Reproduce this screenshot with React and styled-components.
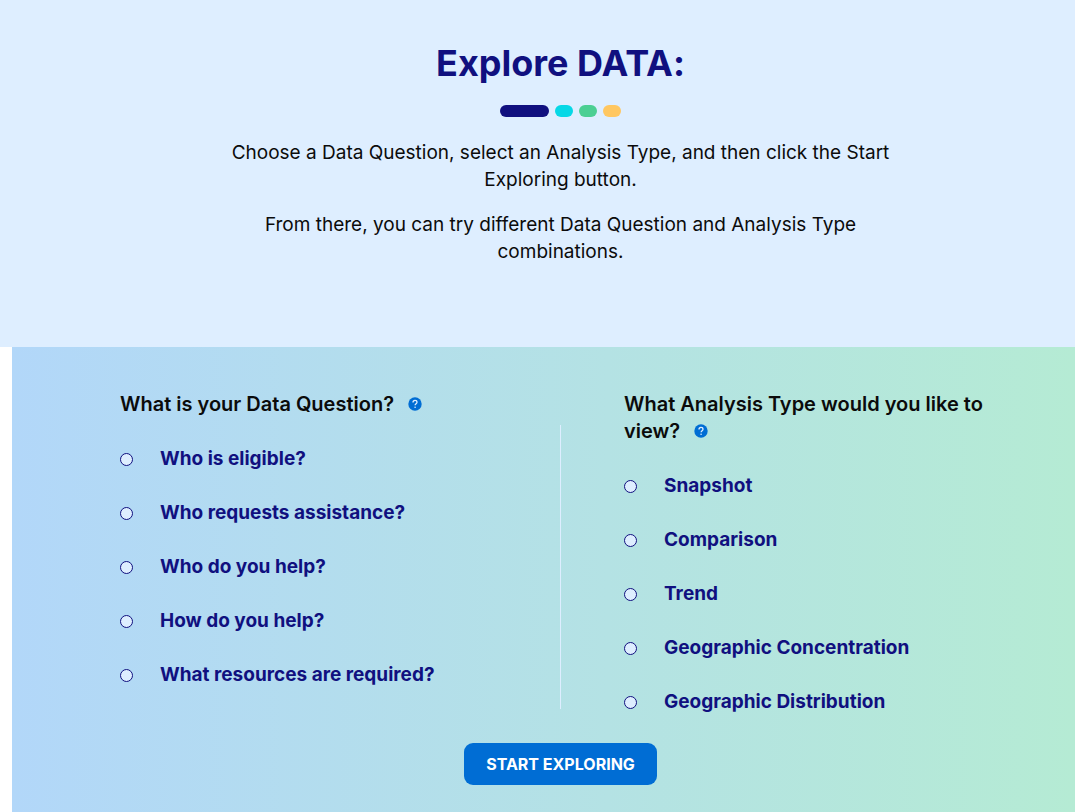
import React, { useState } from "react";
import styled, { createGlobalStyle } from "styled-components";

const questions = [
  "Who is eligible?",
  "Who requests assistance?",
  "Who do you help?",
  "How do you help?",
  "What resources are required?",
];

const analysisTypes = [
  "Snapshot",
  "Comparison",
  "Trend",
  "Geographic Concentration",
  "Geographic Distribution",
];

function OptionGroup({ name, title, options }) {
  const [selected, setSelected] = useState(null);

  return (
    <Group>
      <legend>
        {title}
        <Help type="button" aria-label="Help">
          <svg viewBox="0 0 14 14" width="14" height="14" aria-hidden="true">
            <circle cx="7" cy="7" r="6.7" fill="#006dd4" />
            <path
              d="M5 5.6C5 4.2 5.9 3.4 7 3.4s2 .7 2 1.8c0 1.4-1.9 1.5-1.9 3.1"
              fill="none"
              stroke="#deeeff"
              strokeWidth="1.3"
            />
            <circle cx="7.1" cy="10.3" r="0.8" fill="#deeeff" />
          </svg>
        </Help>
      </legend>
      {options.map((option) => (
        <Option key={option}>
          <Radio
            type="radio"
            name={name}
            value={option}
            checked={selected === option}
            onChange={() => setSelected(option)}
          />
          {option}
        </Option>
      ))}
    </Group>
  );
}

export default function App() {
  return (
    <>
      <GlobalStyle />
      <Intro>
        <h1>Explore DATA:</h1>
        <Dashes>
          <Dash $color="#10107f" $long />
          <Dash $color="#06d8e6" />
          <Dash $color="#4bcf93" />
          <Dash $color="#ffc761" />
        </Dashes>
        <p>
          Choose a Data Question, select an Analysis Type, and then click the
          Start Exploring button.
        </p>
        <p>
          From there, you can try different Data Question and Analysis Type
          combinations.
        </p>
      </Intro>
      <Form onSubmit={(e) => e.preventDefault()}>
        <Columns>
          <OptionGroup
            name="question"
            title="What is your Data Question?"
            options={questions}
          />
          <Divider />
          <OptionGroup
            name="analysis"
            title="What Analysis Type would you like to view?"
            options={analysisTypes}
          />
        </Columns>
        <StartButton type="submit">START EXPLORING</StartButton>
      </Form>
    </>
  );
}

const GlobalStyle = createGlobalStyle`
  * {
    box-sizing: border-box;
  }
  html, body, #root {
    height: 100%;
  }
  body {
    margin: 0;
    background: #fff;
    color: #0b0b0b;
    font-family: Inter, "Open Sans", sans-serif;
    font-size: 19px;
    line-height: 27px;
  }
  #root {
    display: flex;
    flex-direction: column;
  }
`;

const Intro = styled.header`
  display: flex;
  flex-direction: column;
  align-items: center;
  padding: 39px 0 82px 46px;
  background: #deeeff;
  text-align: center;
  h1 {
    margin: 0 0 18px;
    color: #10107f;
    font-size: 36px;
    font-weight: 700;
    font-variant-ligatures: no-contextual;
    line-height: 48px;
  }
  p {
    max-width: 672px;
    margin: 0 0 18px;
    &:last-child {
      margin-bottom: 0;
    }
  }
`;

const Dashes = styled.div`
  display: flex;
  gap: 6px;
  margin-bottom: 22px;
`;

const Dash = styled.span`
  width: ${(props) => (props.$long ? "49px" : "18px")};
  height: 12px;
  border-radius: 6px;
  background: ${(props) => props.$color};
`;

const Form = styled.form`
  display: flex;
  flex: 1 0 auto;
  flex-direction: column;
  align-items: center;
  margin-left: 12px;
  padding: 44px 74px 27px 108px;
  background: linear-gradient(90deg, #b2d7f9, #b4e2e4 56%, #b5ebd4);
`;

const Columns = styled.div`
  display: grid;
  grid-template-columns: 1fr 1px 1fr;
  gap: 63px;
  width: 100%;
`;

const Divider = styled.div`
  margin: 34px 0 20px;
  background: #deeeff;
`;

const Group = styled.fieldset`
  min-width: 0;
  margin: 0;
  padding: 0;
  border: 0;
  legend {
    margin-bottom: 14px;
    padding: 0;
    font-size: 20px;
    font-weight: 600;
  }
`;

const Help = styled.button`
  margin-left: 14px;
  padding: 0;
  border: 0;
  background: none;
  line-height: 14px;
  cursor: pointer;
  svg {
    display: block;
  }
`;

const Option = styled.label`
  display: flex;
  align-items: center;
  gap: 27px;
  width: fit-content;
  padding: 13px 0 14px;
  color: #10107f;
  font-weight: 700;
  cursor: pointer;
`;

const Radio = styled.input`
  flex: none;
  width: 13px;
  height: 13px;
  margin: 1px 0 0;
  appearance: none;
  border: 1px solid #10107f;
  border-radius: 50%;
  background: #deeeff;
  &:checked {
    border-width: 4px;
  }
`;

const StartButton = styled.button`
  margin-top: 14px;
  padding: 9px 22px;
  border: 0;
  border-radius: 9px;
  background: #006dd4;
  color: #fff;
  font-family: inherit;
  font-size: 16px;
  font-weight: 700;
  line-height: 24px;
  cursor: pointer;
`;
